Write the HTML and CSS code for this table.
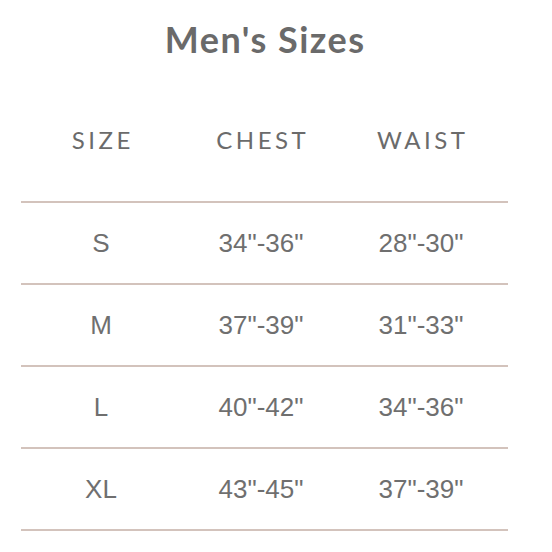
FILE: index.html
```html
<!DOCTYPE html>
<html>
<head>
<meta charset="utf-8">
<link rel="stylesheet" href="styles.css">
</head>
<body>
<div class="chart">
  <h1 class="title">Men's Sizes</h1>
  <div class="row head">
    <div class="cell">SIZE</div>
    <div class="cell">CHEST</div>
    <div class="cell">WAIST</div>
  </div>
  <div class="row">
    <div class="cell">S</div>
    <div class="cell">34"-36"</div>
    <div class="cell">28"-30"</div>
  </div>
  <div class="row">
    <div class="cell">M</div>
    <div class="cell">37"-39"</div>
    <div class="cell">31"-33"</div>
  </div>
  <div class="row">
    <div class="cell">L</div>
    <div class="cell">40"-42"</div>
    <div class="cell">34"-36"</div>
  </div>
  <div class="row">
    <div class="cell">XL</div>
    <div class="cell">43"-45"</div>
    <div class="cell">37"-39"</div>
  </div>
</div>
</body>
</html>
```
FILE: styles.css
```css
html, body {
  margin: 0;
  padding: 0;
  background: #ffffff;
}
.chart {
  width: 487px;
  margin-left: 21px;
}
.title {
  margin: 0;
  height: 80px;
  line-height: 78px;
  text-align: center;
  font-family: Lato, "Noto Sans", sans-serif;
  font-weight: 700;
  font-size: 36px;
  letter-spacing: 1.5px;
  padding-left: 1.5px;
  box-sizing: border-box;
  color: #6a6a6a;
}
.row {
  display: grid;
  grid-template-columns: 160px 160px 160px;
  height: 80px;
  align-items: center;
  border-bottom: 2px solid #d3c3bc;
  font-family: "Liberation Sans", Arial, sans-serif;
  font-size: 26px;
  color: #6f6f6f;
}
.row.head {
  height: auto;
  padding: 40px 0 41px;
  line-height: 40px;
  font-family: Lato, "Noto Sans", sans-serif;
  font-size: 24px;
  letter-spacing: 3.5px;
  color: #6b6b6b;
}
.row.head .cell {
  padding-left: 3.5px;
}
.cell {
  text-align: center;
}
```
